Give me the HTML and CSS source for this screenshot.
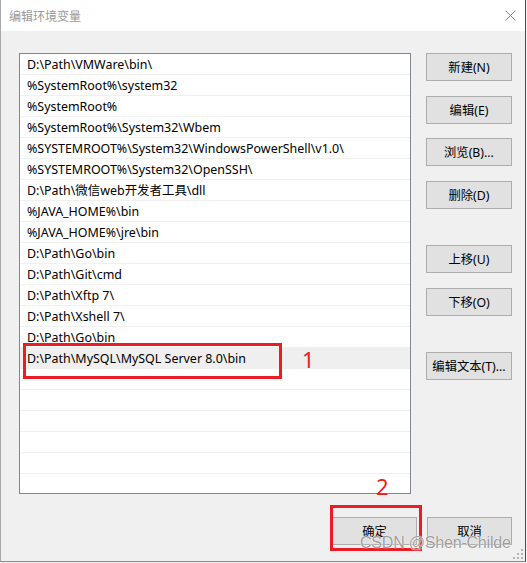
FILE: index.html
```html
<!DOCTYPE html>
<html lang="zh-CN">
<head>
  <meta charset="UTF-8" />
  <meta name="viewport" content="width=device-width, initial-scale=1.0"/>
  <title>编辑环境变量</title>
  <link rel="stylesheet" href="styles.css">
</head>
<body>
  <div class="window">
    <div class="titlebar">
      <span class="title">编辑环境变量</span>
      <svg class="close" width="11" height="11" viewBox="0 0 11 11">
        <path d="M0.5 0.5L10.5 10.5M10.5 0.5L0.5 10.5" stroke="#808080" stroke-width="1" fill="none"/>
      </svg>
    </div>

    <div class="content">
      <div class="main">
        <ul class="path-list">
          <li>D:\Path\VMWare\bin\</li>
          <li>%SystemRoot%\system32</li>
          <li>%SystemRoot%</li>
          <li>%SystemRoot%\System32\Wbem</li>
          <li>%SYSTEMROOT%\System32\WindowsPowerShell\v1.0\</li>
          <li>%SYSTEMROOT%\System32\OpenSSH\</li>
          <li>D:\Path\微信web开发者工具\dll</li>
          <li>%JAVA_HOME%\bin</li>
          <li>%JAVA_HOME%\jre\bin</li>
          <li>D:\Path\Go\bin</li>
          <li>D:\Path\Git\cmd</li>
          <li>D:\Path\Xftp 7\</li>
          <li>D:\Path\Xshell 7\</li>
          <li>D:\Path\Go\bin</li>
          <li class="selected">D:\Path\MySQL\MySQL Server 8.0\bin</li>
          <li></li>
          <li></li>
          <li></li>
          <li></li>
          <li></li>
          <li></li>
        </ul>

        <div class="side">
          <div class="btn-group">
            <button class="btn">新建(N)</button>
            <button class="btn">编辑(E)</button>
            <button class="btn">浏览(B)...</button>
            <button class="btn">删除(D)</button>
          </div>
          <div class="btn-group">
            <button class="btn">上移(U)</button>
            <button class="btn">下移(O)</button>
          </div>
          <div class="btn-group">
            <button class="btn">编辑文本(T)...</button>
          </div>
        </div>
      </div>

      <div class="footer">
        <button class="btn">确定</button>
        <button class="btn">取消</button>
      </div>
    </div>

    <!-- 标注 -->
    <div class="mark mark-row"></div>
    <span class="mark-num num-1">1</span>
    <div class="mark mark-ok"></div>
    <span class="mark-num num-2">2</span>

    <span class="watermark">CSDN @Shen-Childe</span>

    <svg class="grip" width="10" height="10" viewBox="0 0 10 10">
      <rect x="8" y="0" width="2" height="2" fill="#b4b4b4"/>
      <rect x="4" y="4" width="2" height="2" fill="#b4b4b4"/>
      <rect x="8" y="4" width="2" height="2" fill="#b4b4b4"/>
      <rect x="0" y="8" width="2" height="2" fill="#b4b4b4"/>
      <rect x="4" y="8" width="2" height="2" fill="#b4b4b4"/>
      <rect x="8" y="8" width="2" height="2" fill="#b4b4b4"/>
    </svg>
  </div>
</body>
</html>
```

FILE: styles.css
```css
body {
  font-family: "Noto Sans", "Noto Sans CJK SC", sans-serif;
  font-size: 12px;
  background-color: #f0f0f0;
  margin: 0;
  padding: 0;
}

.window {
  position: relative;
  width: 524px;
  height: 561px;
  background-color: #f0f0f0;
  border-left: 1px solid #a8a8a8;
  border-right: 1px solid #4d4d4d;
  border-bottom: 1px solid #8c8c8c;
  overflow: hidden;
}

.titlebar {
  height: 31px;
  background-color: #fff;
  display: flex;
  align-items: center;
  justify-content: space-between;
  padding: 0 9px 0 8px;
}

.title {
  font-family: "Noto Sans CJK SC", sans-serif;
  color: #9a9a9a;
  font-size: 12px;
}

.close {
  margin-bottom: 1px;
}

.content {
  padding: 22px 13px 0 18px;
}

.main {
  display: flex;
  gap: 15px;
}

.path-list {
  list-style: none;
  margin: 0;
  padding: 0;
  width: 390px;
  height: 439px;
  background-color: #fff;
  border: 1px solid #828790;
  overflow: hidden;
}

.path-list li {
  height: 20px;
  line-height: 22px;
  padding-left: 7px;
  border-bottom: 1px solid #f0f0f0;
  color: #000;
  font-size: 12.45px;
  white-space: nowrap;
}

.path-list li.selected {
  background-color: #efefef;
}

.side {
  display: flex;
  flex-direction: column;
  gap: 36px;
}

.btn-group {
  display: flex;
  flex-direction: column;
  gap: 14.67px;
}

.btn {
  width: 86px;
  height: 28px;
  padding: 0;
  background-color: #e1e1e1;
  border: 1px solid #adadad;
  font-family: "Noto Sans", "Noto Sans CJK SC", sans-serif;
  font-size: 12.3px;
  color: #000;
}

.footer {
  display: flex;
  justify-content: flex-end;
  gap: 10px;
  margin-top: 23px;
}

.footer .btn {
  width: 85px;
}

.mark {
  position: absolute;
  border: 3px solid #ec1c24;
}

.mark-row {
  left: 22px;
  top: 343px;
  width: 253px;
  height: 30px;
}

.mark-ok {
  left: 329px;
  top: 505px;
  width: 86px;
  height: 40px;
}

.mark-num {
  position: absolute;
  color: #ec1c24;
  font-family: "Noto Sans", sans-serif;
  font-size: 22px;
  line-height: 22px;
}

.num-1 {
  left: 301px;
  top: 348px;
}

.num-2 {
  left: 375px;
  top: 475px;
}

.watermark {
  position: absolute;
  left: 359px;
  top: 534px;
  font-family: "Liberation Sans", sans-serif;
  font-size: 16px;
  letter-spacing: -0.2px;
  color: rgba(130, 130, 130, 0.8);
  text-shadow: 0 0 1px #fff, 0 0 1px #fff;
}

.grip {
  position: absolute;
  right: 2px;
  bottom: 2px;
}
```
